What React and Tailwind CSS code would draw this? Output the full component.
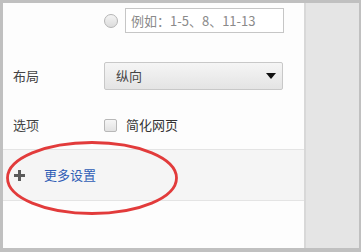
export default function App() {
  const font = { fontFamily: '"Noto Sans CJK SC", "Liberation Sans", sans-serif' };
  return (
    <div
      className="relative flex h-[252px] w-[361px] border-t-[3px] border-l-[3px] border-b-4 border-r-2 border-[#c0c0c0] text-[13px] text-[#333]"
      style={font}
    >
      {/* Settings column */}
      <div className="flex w-[301px] flex-col bg-[#fdfdfd]">
        {/* Page range input */}
        <div className="mt-[5px] flex h-[25px] items-center pl-[101px]">
          <span className="h-[14px] w-[14px] rounded-full border border-[#b5b5b5] bg-gradient-to-b from-[#f4f4f4] to-[#dcdcdc]" />
          <div className="ml-[7px] flex h-[25px] w-[159px] items-center border border-[#c6c6c6] bg-white pl-[5px] text-[#8a8a8a]">
            例如：1-5、8、11-13
          </div>
        </div>

        {/* Layout select */}
        <div className="mt-[29px] flex h-[28px] items-center pl-[10px]">
          <span className="w-[91px] text-[#444]">布局</span>
          <div className="flex h-[28px] w-[179px] items-center justify-between rounded-[2px] border border-[#c8c8c8] bg-gradient-to-b from-[#f5f5f5] to-[#e4e4e4] pl-[11px] pr-[6px] text-[#444]">
            <span>纵向</span>
            <svg width="10" height="6" viewBox="0 0 10 6">
              <path d="M0 0h10L5 6z" fill="#111" />
            </svg>
          </div>
        </div>

        {/* Options */}
        <div className="mt-[22px] flex h-[26px] items-center pl-[10px]">
          <span className="w-[91px] text-[#444]">选项</span>
          <span className="h-[13px] w-[13px] rounded-[2px] border border-[#b8b8b8] bg-gradient-to-b from-[#f6f6f6] to-[#e2e2e2]" />
          <span className="ml-[9px]">简化网页</span>
        </div>

        {/* More settings */}
        <div className="mt-[11px] flex h-[52px] items-center border-t border-b border-[#e4e4e4] bg-[#f5f5f5] pl-[11px]">
          <svg width="11" height="11" viewBox="0 0 11 11">
            <path d="M4 0h3v4h4v3H7v4H4V7H0V4h4z" fill="#5a5a5a" />
          </svg>
          <span className="ml-[19px] text-[#2f5db5]">更多设置</span>
        </div>
      </div>

      {/* Preview side */}
      <div className="flex-1 border-l-2 border-[#d8d8d8] bg-[#e5e5e5]" />

      {/* Red annotation ellipse */}
      <svg
        className="pointer-events-none absolute left-[2px] top-[137px]"
        width="174"
        height="76"
        viewBox="0 0 174 76"
      >
        <ellipse cx="87" cy="38" rx="84.5" ry="35.5" fill="none" stroke="#e23b3b" strokeWidth="2.8" />
      </svg>
    </div>
  );
}
